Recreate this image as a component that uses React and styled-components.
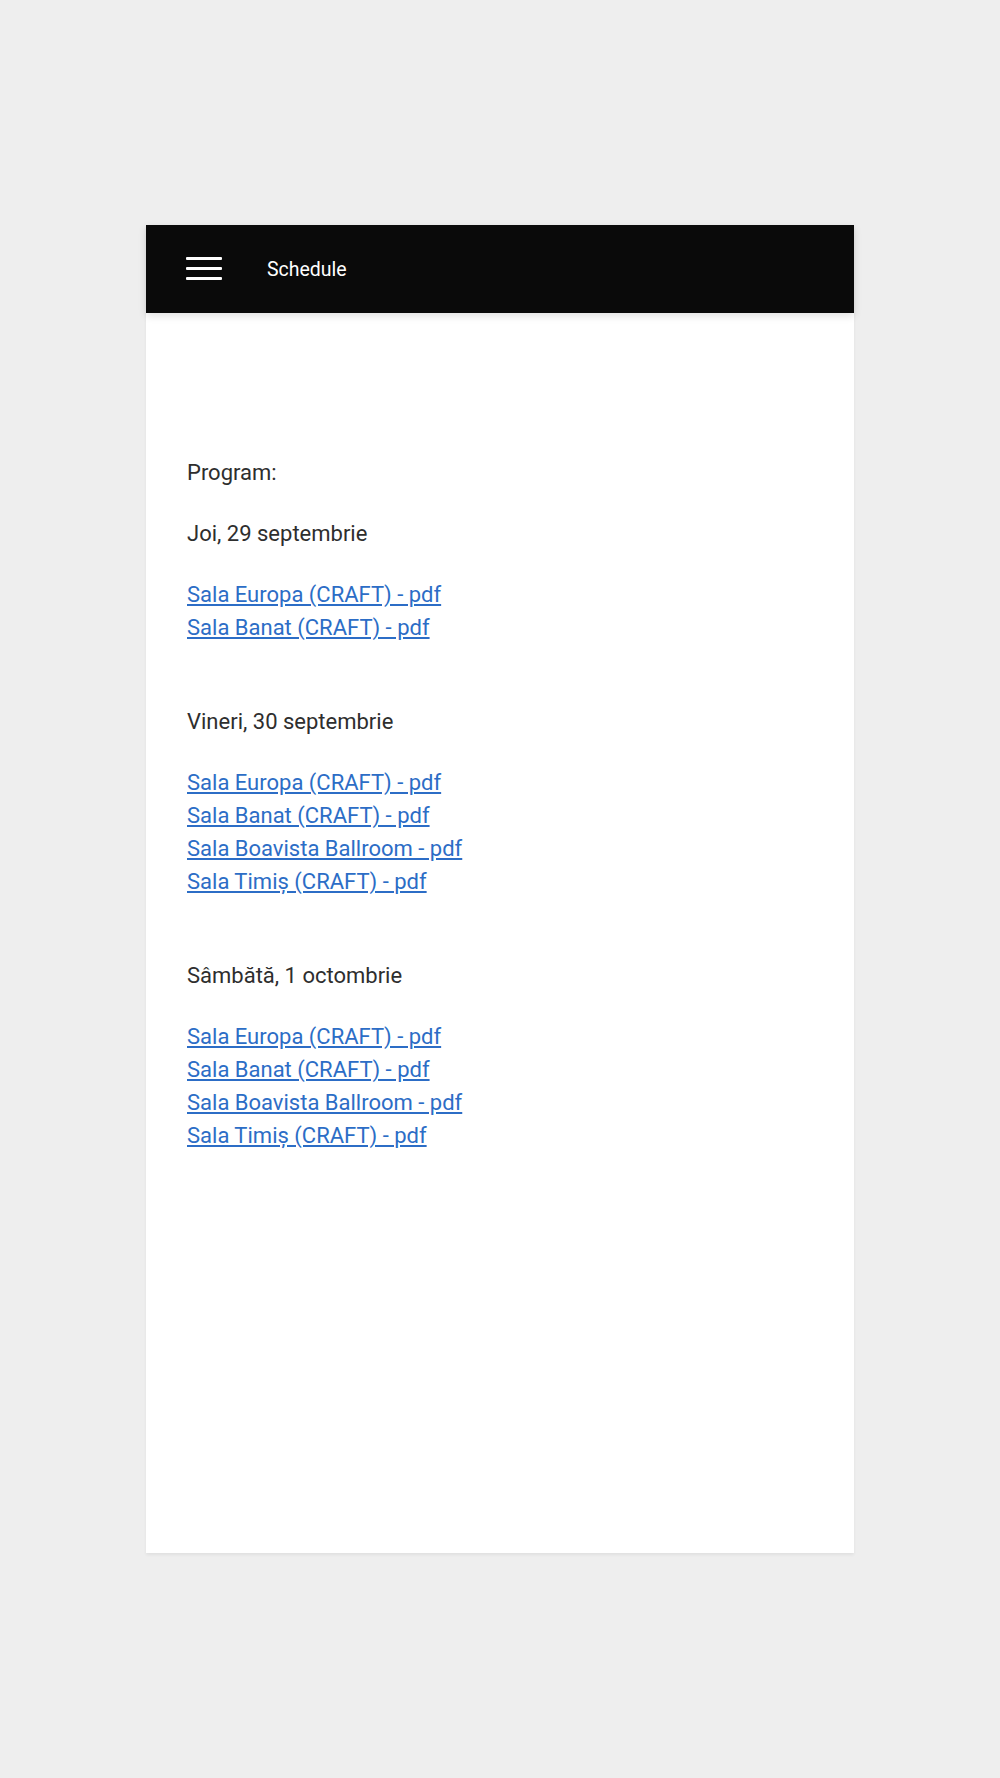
import React from "react";
import styled, { createGlobalStyle } from "styled-components";

const Global = createGlobalStyle`
  html, body { margin: 0; padding: 0; background: #eeeeee; }
  body { font-family: Roboto, "Noto Sans", Arial, sans-serif; }
`;

const Page = styled.div`
  min-height: 1778px;
  padding-top: 225px;
  box-sizing: border-box;
  display: flex;
  justify-content: center;
`;

const Card = styled.div`
  width: 708px;
  height: 1328px;
  background: #ffffff;
  box-shadow: 0 2px 3px rgba(0, 0, 0, 0.06);
  display: flex;
  flex-direction: column;
`;

const Header = styled.header`
  height: 88px;
  background: #0a0a0a;
  display: flex;
  align-items: center;
  padding-left: 40px;
  box-shadow: 0 3px 8px rgba(0, 0, 0, 0.12);
  gap: 45px;
  position: relative;
`;

const Burger = styled.div`
  width: 36px;
  display: flex;
  flex-direction: column;
  gap: 7px;
  margin-top: -2px;
  span {
    display: block;
    height: 3px;
    background: #ffffff;
    border-radius: 1px;
  }
`;

const Title = styled.div`
  color: #ffffff;
  font-size: 19.5px;
  font-family: Roboto, sans-serif;
  margin-top: 1px;
`;

const Content = styled.main`
  padding: 143px 41px 0;
  color: #2e2e2e;
  font-size: 22px;
  line-height: 33px;
`;

const Para = styled.p`
  margin: 0 0 28px;
`;

const Links = styled.div`
  display: flex;
  flex-direction: column;
  margin-bottom: ${(p) => (p.$last ? 0 : 61)}px;
`;

const Link = styled.a`
  color: #2c6dc6;
  text-decoration: underline;
  text-underline-offset: 2px;
  align-self: flex-start;
`;

const days = [
  {
    title: "Joi, 29 septembrie",
    links: ["Sala Europa (CRAFT) - pdf", "Sala Banat (CRAFT) - pdf"],
  },
  {
    title: "Vineri, 30 septembrie",
    links: [
      "Sala Europa (CRAFT) - pdf",
      "Sala Banat (CRAFT) - pdf",
      "Sala Boavista Ballroom - pdf",
      "Sala Timiș (CRAFT) - pdf",
    ],
  },
  {
    title: "Sâmbătă, 1 octombrie",
    links: [
      "Sala Europa (CRAFT) - pdf",
      "Sala Banat (CRAFT) - pdf",
      "Sala Boavista Ballroom - pdf",
      "Sala Timiș (CRAFT) - pdf",
    ],
  },
];

export default function App() {
  return (
    <>
      <Global />
      <Page>
        <Card>
          <Header>
            <Burger>
              <span />
              <span />
              <span />
            </Burger>
            <Title>Schedule</Title>
          </Header>
          <Content>
            <Para>Program:</Para>
            {days.map((d, i) => (
              <React.Fragment key={d.title}>
                <Para>{d.title}</Para>
                <Links $last={i === days.length - 1}>
                  {d.links.map((l) => (
                    <Link key={l} href="#">
                      {l}
                    </Link>
                  ))}
                </Links>
              </React.Fragment>
            ))}
          </Content>
        </Card>
      </Page>
    </>
  );
}
